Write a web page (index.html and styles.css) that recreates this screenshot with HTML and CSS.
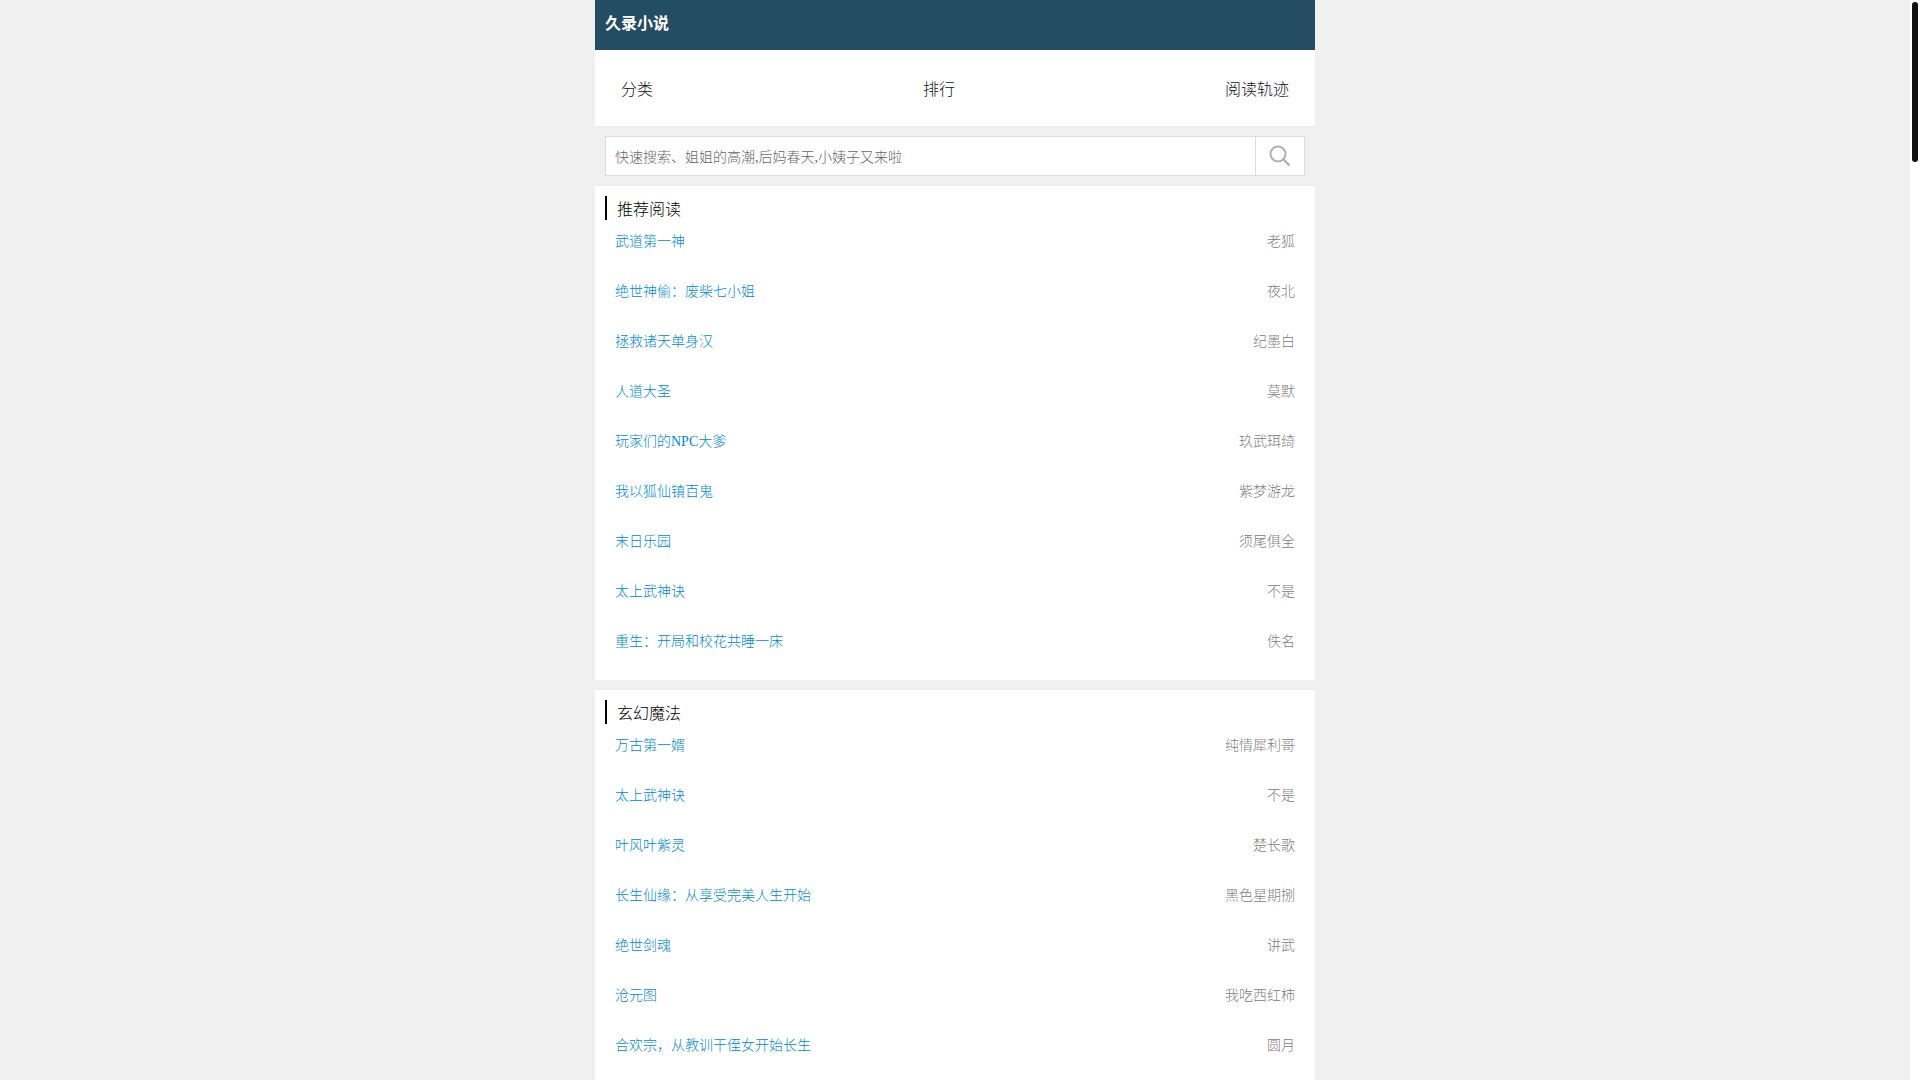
FILE: index.html
```html
<!DOCTYPE html>
<html lang="zh-CN">
<head>
  <meta charset="UTF-8">
  <title>久录小说</title>
  <link rel="stylesheet" href="styles.css">
</head>
<body>
  <div class="container">
    <div class="header">久录小说</div>

    <div class="nav">
      <a href="#">分类</a>
      <a href="#">排行</a>
      <a href="#">阅读轨迹</a>
    </div>

    <form class="search">
      <input type="text" placeholder="快速搜索、姐姐的高潮,后妈春天,小姨子又来啦">
      <button type="button" aria-label="搜索">
        <svg width="24" height="24" viewBox="0 0 24 24" fill="none" stroke="#b0b0b0">
          <circle cx="10" cy="10" r="7.5" stroke-width="2"/>
          <path d="M15.5 15.5l6 6" stroke-width="2.4"/>
        </svg>
      </button>
    </form>

    <div class="section">
      <h2>推荐阅读</h2>
      <ul class="book-list">
        <li><a href="#">武道第一神</a><span>老狐</span></li>
        <li><a href="#">绝世神偷：废柴七小姐</a><span>夜北</span></li>
        <li><a href="#">拯救诸天单身汉</a><span>纪墨白</span></li>
        <li><a href="#">人道大圣</a><span>莫默</span></li>
        <li><a href="#">玩家们的NPC大爹</a><span>玖武珥绮</span></li>
        <li><a href="#">我以狐仙镇百鬼</a><span>紫梦游龙</span></li>
        <li><a href="#">末日乐园</a><span>须尾俱全</span></li>
        <li><a href="#">太上武神诀</a><span>不是</span></li>
        <li><a href="#">重生：开局和校花共睡一床</a><span>佚名</span></li>
      </ul>
    </div>

    <div class="section">
      <h2>玄幻魔法</h2>
      <ul class="book-list">
        <li><a href="#">万古第一婿</a><span>纯情犀利哥</span></li>
        <li><a href="#">太上武神诀</a><span>不是</span></li>
        <li><a href="#">叶风叶紫灵</a><span>楚长歌</span></li>
        <li><a href="#">长生仙缘：从享受完美人生开始</a><span>黑色星期捌</span></li>
        <li><a href="#">绝世剑魂</a><span>讲武</span></li>
        <li><a href="#">沧元图</a><span>我吃西红柿</span></li>
        <li><a href="#">合欢宗，从教训干侄女开始长生</a><span>圆月</span></li>
      </ul>
    </div>
  </div>

  <div class="scrollbar"><div class="scrollbar-thumb"></div></div>
</body>
</html>
```

FILE: styles.css
```css
body {
  margin: 0;
  padding-right: 10px;
  background: #f0f0f0;
  font-family: "Liberation Serif", "Noto Sans CJK SC", serif;
  font-size: 14px;
  font-weight: 300;
  color: #222;
}
a {
  text-decoration: none;
}
.scrollbar {
  position: fixed;
  top: 0;
  right: 0;
  bottom: 0;
  width: 10px;
  background: #fff;
}
.scrollbar-thumb {
  width: 6px;
  height: 160px;
  margin: 2px 2px 0;
  border-radius: 3px;
  background: #111;
}
.container {
  width: 720px;
  margin: 0 auto;
}
.header {
  height: 50px;
  padding-left: 10px;
  line-height: 48px;
  background: #244c62;
  color: #fff;
  font-size: 16px;
  font-weight: bold;
}
.nav {
  display: flex;
  justify-content: space-between;
  height: 76px;
  padding: 0 26px;
  background: #fff;
  font-size: 16px;
  line-height: 80px;
}
.nav a {
  color: #111;
}
.search {
  display: flex;
  height: 40px;
  margin: 0;
  padding: 10px;
}
.search input {
  flex: 1;
  min-width: 0;
  padding: 4px 9px 0;
  border: 1px solid #ddd;
  border-right: none;
  outline: none;
  background: #fff;
  font-family: inherit;
  font-size: 14px;
  font-weight: 300;
}
.search input::placeholder {
  color: #666;
}
.search button {
  display: flex;
  align-items: center;
  justify-content: center;
  width: 50px;
  padding: 0;
  border: 1px solid #ddd;
  background: #fff;
}
.section {
  margin-bottom: 10px;
  padding: 10px;
  background: #fff;
}
.section h2 {
  height: 24px;
  margin: 0;
  padding-left: 10px;
  border-left: 2px solid #000;
  color: #000;
  font-size: 16px;
  font-weight: 300;
  line-height: 28px;
}
.book-list {
  margin: 0;
  padding: 0 10px;
  list-style: none;
}
.book-list li {
  display: flex;
  justify-content: space-between;
  height: 50px;
  line-height: 44px;
}
.book-list a {
  color: #0088d8;
}
.book-list span {
  color: #808080;
}
```
